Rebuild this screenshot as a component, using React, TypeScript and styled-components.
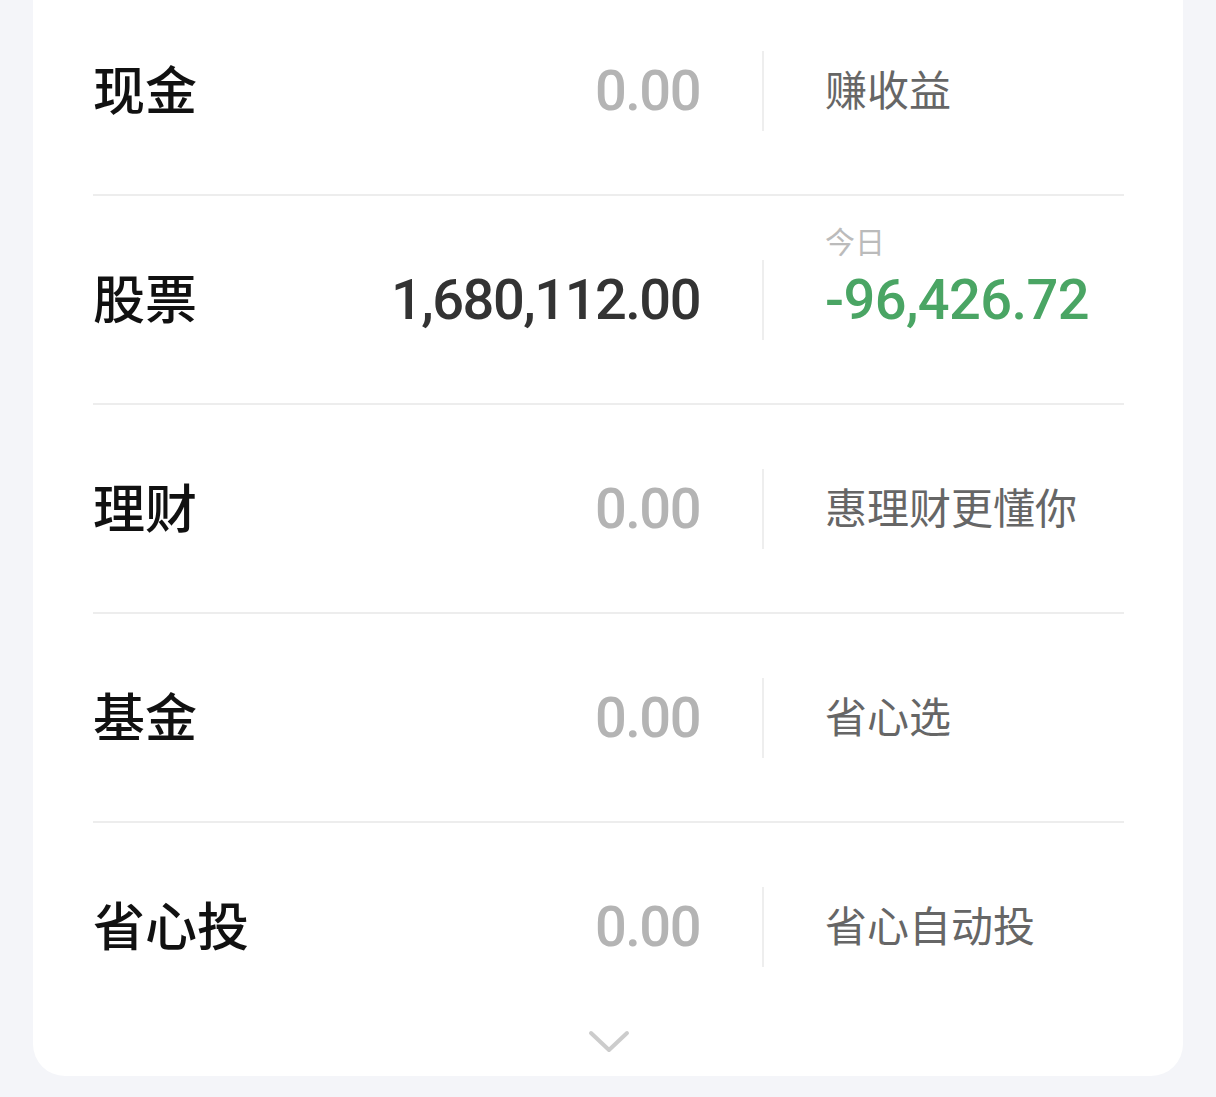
import React from 'react';
import styled, { createGlobalStyle } from 'styled-components';

const GlobalStyle = createGlobalStyle`
  html, body {
    margin: 0;
    padding: 0;
    background: #f4f5f9;
  }
  body {
    font-family: "Noto Sans CJK SC", "Noto Sans", sans-serif;
  }
`;

const Page = styled.div`
  min-height: 100vh;
  background: #f4f5f9;
  overflow: hidden;
`;

const Card = styled.section`
  margin: -13px 33px 0;
  background: #ffffff;
  border-radius: 0 0 32px 32px;
  padding: 0 59px 0 60px;
`;

const Row = styled.div<{ $last?: boolean }>`
  display: flex;
  align-items: center;
  height: 207px;
  border-bottom: ${(p) => (p.$last ? 'none' : '2px solid #ededed')};
`;

const Label = styled.div`
  flex: 1;
  font-size: 52px;
  font-weight: 500;
  color: #111111;
  line-height: 1;
  margin-bottom: 6px;
`;

const Amount = styled.div<{ $muted?: boolean; $tone?: 'up' | 'down' }>`
  font-family: Roboto, "Liberation Sans", sans-serif;
  font-size: 56px;
  font-weight: 500;
  letter-spacing: ${(p) => (p.$tone ? '-0.6px' : '-1.5px')};
  line-height: 1;
  color: ${(p) => (p.$tone === 'down' ? '#4aa564' : p.$muted ? '#b4b4b4' : '#333333')};
`;

const Divider = styled.div`
  width: 2px;
  height: 80px;
  background: #eeeeee;
  margin: 0 61px 0 62px;
`;

const Side = styled.div`
  position: relative;
  width: 299px;
`;

const SideText = styled.div`
  font-size: 42px;
  color: #666666;
  line-height: 1;
  margin-bottom: 6px;
`;

const SideCaption = styled.div`
  position: absolute;
  left: 0;
  bottom: 100%;
  margin-bottom: 17px;
  font-size: 30px;
  color: #bbbbbb;
  line-height: 1;
`;

const Footer = styled.div`
  display: flex;
  justify-content: center;
  padding: 0 0 22px;
`;

const Chevron = () => (
  <svg width="42" height="24" viewBox="0 0 42 24" fill="none">
    <path d="M3 3 L21 20 L39 3" stroke="#cccccc" strokeWidth="4" strokeLinecap="round" strokeLinejoin="round" />
  </svg>
);

type Item = {
  name: string;
  amount: string;
  note?: string;
  today?: string;
};

const items: Item[] = [
  { name: '现金', amount: '0.00', note: '赚收益' },
  { name: '股票', amount: '1,680,112.00', today: '-96,426.72' },
  { name: '理财', amount: '0.00', note: '惠理财更懂你' },
  { name: '基金', amount: '0.00', note: '省心选' },
  { name: '省心投', amount: '0.00', note: '省心自动投' },
];

const App: React.FC = () => {
  return (
    <Page>
      <GlobalStyle />
      <Card>
        {items.map((item, i) => (
          <Row key={item.name} $last={i === items.length - 1}>
            <Label>{item.name}</Label>
            <Amount $muted={item.amount === '0.00'}>{item.amount}</Amount>
            <Divider />
            <Side>
              {item.today ? (
                <>
                  <SideCaption>今日</SideCaption>
                  <Amount $tone="down">{item.today}</Amount>
                </>
              ) : (
                <SideText>{item.note}</SideText>
              )}
            </Side>
          </Row>
        ))}
        <Footer>
          <Chevron />
        </Footer>
      </Card>
    </Page>
  );
};

export default App;
